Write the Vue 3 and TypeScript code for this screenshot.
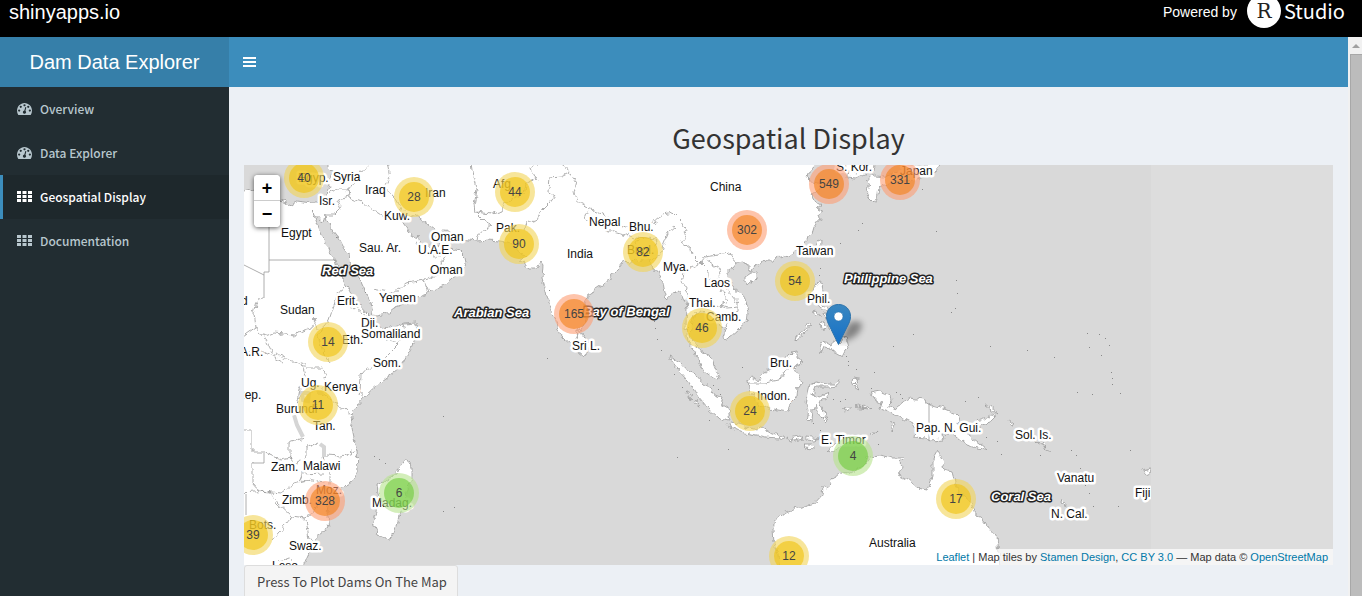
<script setup lang="ts">
import { ref } from 'vue'

interface MenuItem { label: string; icon: 'gauge' | 'grid' }
interface Label { text: string; x: number; y: number }
interface Cluster { count: number; x: number; y: number }

const menu: MenuItem[] = [
  { label: 'Overview', icon: 'gauge' },
  { label: 'Data Explorer', icon: 'gauge' },
  { label: 'Geospatial Display', icon: 'grid' },
  { label: 'Documentation', icon: 'grid' },
]
const active = ref(2)

const gaugePath =
  'M384 1152q0-53-37.5-90.5t-90.5-37.5-90.5 37.5-37.5 90.5 37.5 90.5 90.5 37.5 90.5-37.5 37.5-90.5zm192-448q0-53-37.5-90.5t-90.5-37.5-90.5 37.5-37.5 90.5 37.5 90.5 90.5 37.5 90.5-37.5 37.5-90.5zm428 481l101-382q6-26-7.5-48.5t-38.5-29.5-48 6.5-30 39.5l-101 382q-60 5-107 43.5t-63 98.5q-20 77 20 146t117 89 146-20 89-117q16-60-6-117t-72-91zm660-33q0-53-37.5-90.5t-90.5-37.5-90.5 37.5-37.5 90.5 37.5 90.5 90.5 37.5 90.5-37.5 37.5-90.5zm-640-640q0-53-37.5-90.5t-90.5-37.5-90.5 37.5-37.5 90.5 37.5 90.5 90.5 37.5 90.5-37.5 37.5-90.5zm448 192q0-53-37.5-90.5t-90.5-37.5-90.5 37.5-37.5 90.5 37.5 90.5 90.5 37.5 90.5-37.5 37.5-90.5zm320 448q0 261-141 483-19 29-54 29h-1402q-35 0-54-29-141-221-141-483 0-182 71-348t191-286 286-191 348-71 348 71 286 191 191 286 71 348z'
const gridPath =
  'M0 0h4v3h-4zM5.500 0h4v3h-4zM11 0h4v3h-4zM0 4h4v3h-4zM5.500 4h4v3h-4zM11 4h4v3h-4zM0 8h4v3h-4zM5.500 8h4v3h-4zM11 8h4v3h-4z'

// Land outlines in map pixels, origin at the map's top left corner.
const land: string[] = [
  // Africa, Arabia and mainland Asia
  'M-4 28L5 25 10 24 16 25 22 27 29 32 35 36 42 38 48 40 53 36 60 37 67 38 75 38 80 36 83 30 85 20 86 13 88 6 83 1 83 -5 576 -5 570 3 564 8 563 13 567 17 575 18 576 24 568 30 573 38 577 40 573 43 578 46 575 50 576 54 570 62 568 69 564 72 562 78 556 84 548 88 540 91 532 93 530 96 522 96 514 99 510 100 508 107 504 105 504 99 498 97 493 98 489 103 484 105 484 113 491 123 498 129 502 137 504 147 503 157 494 165 488 170 481 175 479 172 482 163 476 160 469 153 464 148 456 147 451 148 448 157 446 170 448 177 454 182 458 188 465 190 468 195 473 207 475 215 469 213 459 205 453 192 449 183 444 177 442 160 443 143 438 130 434 125 429 128 423 133 420 123 419 117 414 108 409 102 406 95 401 92 396 98 391 95 386 98 379 97 376 101 369 108 363 117 359 120 350 126 344 130 341 137 341 157 333 170 330 176 323 177 318 172 311 153 306 140 303 130 298 113 299 100 297 97 293 103 286 103 279 97 275 95 283 90 276 88 268 78 256 76 245 75 233 76 225 75 216 74 206 67 201 65 194 66 188 62 182 58 172 50 166 52 158 46 158 55 163 62 168 70 172 76 174 70 176 78 182 81 192 82 200 76 205 70 206 84 216 86 222 92 223 97 216 107 208 113 200 120 190 125 180 131 167 135 158 140 150 143 142 149 133 151 129 150 127 138 123 130 117 117 110 107 105 97 104 88 100 83 96 75 93 70 85 60 82 57 81 49 79 58 75 55 68 46 71 53 75 63 81 77 86 88 92 95 95 107 100 117 107 127 113 137 122 147 127 152 130 157 133 162 147 163 160 158 173 157 174 167 167 183 158 200 150 207 137 217 120 233 112 242 107 250 109 256 107 263 110 277 113 285 114 307 108 317 97 323 85 332 83 350 85 363 72 373 68 382 63 393 58 405-4 405z',
  // Madagascar, Sri Lanka
  'M163 294L168 303 168 312 164 324 158 343 153 360 148 372 142 374 134 370 129 357 133 347 135 333 133 320 147 312 155 305z',
  'M334 167L340 170 346 180 343 188 337 189 333 179z',
  // Korea, Japan
  'M598 -4L632 -4 630 6 620 9 612 13 603 12 604 5z',
  'M621 16L630 11 640 12 655 7 668 9 690 -4 700 -4 690 8 662 16 645 19 635 22 634 30 630 38 626 34 622 25 628 20z',
  // Taiwan, Hainan
  'M570 80L574 75 577 77 576 86 573 93 570 89z',
  'M508 108L513 108 513 113 508 118 502 117 502 112z',
  // Philippines
  'M574 117L578 119 579 127 577 134 578 140 584 142 584 148 576 142 570 137 569 126z',
  'M569 147L573 146 575 152 571 152zM579 148L584 150 581 154zM577 158L581 156 584 162 579 167zM586 153L592 156 591 166 586 165zM593 160L598 164 595 169z',
  'M576 185L577 179 582 178 587 181 590 176 595 178 601 171 604 183 601 186 598 192 591 188 588 183 580 182 577 189z',
  'M566 157L567 160 560 168 551 176 552 171 560 165z',
  // Sumatra, Java and the lesser Sunda islands
  'M425 192L436 197 446 208 452 210 459 218 466 222 471 230 479 233 477 239 484 243 486 255 474 253 463 243 454 232 444 215 433 203z',
  'M484 261L487 257 498 260 506 263 513 265 518 262 528 268 535 270 534 273 522 272 513 270 500 268z',
  'M535 272L540 271 541 275 536 274zM543 271L548 274 545 276zM548 273L555 271 559 274 550 276zM562 272L576 274 571 276 562 275zM559 279L568 279 571 283 562 282zM583 285L590 279 604 273 599 281 588 287z',
  // Borneo, Sulawesi
  'M504 215L508 212 514 215 519 208 529 203 539 198 544 191 548 187 553 186 553 192 560 197 551 202 553 209 559 218 553 222 552 231 546 237 544 247 534 245 526 243 516 240 510 233 505 225z',
  'M564 228L566 220 571 217 583 219 590 219 596 214 593 221 583 222 571 222 568 230 576 232 586 228 585 231 575 237 581 247 583 255 575 250 571 240 569 245 568 256 563 255 565 245 562 240z',
  'M609 212L615 213 614 216 611 219 616 226 610 222 608 217zM610 242L621 240 628 245 617 243zM599 243L606 242 606 245 600 246zM576 251L580 254 584 252 582 257zM443 232L447 233 444 235zM446 230L442 225 448 229zM452 235L455 242 450 238z',
  // New Guinea and Melanesia
  'M626 228L636 226 646 230 647 237 643 241 651 243 658 237 666 233 679 235 688 240 699 243 711 248 716 253 714 260 721 265 726 272 736 279 742 284 733 283 723 280 713 272 706 268 698 269 699 275 686 276 682 273 671 272 672 265 668 258 656 252 643 247 636 244 638 238 630 234z',
  'M728 258L743 253 748 249 752 251 745 258 733 262zM739 238L748 242 753 249 747 245zM764 255L771 260 768 261zM790 277L798 278 802 282 795 279zM800 284L807 286 804 286zM626 271L633 265 627 273zM647 256L650 261 647 265zM616 240L623 243 617 243z',
  // Australia
  'M626 291L636 290 649 293 659 293 657 298 658 302 654 310 664 315 674 323 683 325 688 312 688 298 690 292 694 285 697 292 699 295 701 305 708 307 711 318 716 328 728 338 732 350 740 355 744 362 753 372 755 388 756 405 536 405 534 390 530 378 529 365 531 355 541 348 556 342 571 338 578 330 579 322 583 324 588 315 596 308 605 309 618 302z',
  'M900 305L907 303 907 306 901 309zM896 322L902 320 903 324zM818 335L824 342 817 338z',
]

// Political borders.
const borders: string[] = [
  'M20 133L14 134 10 148 12 162 20 172 28 188 45 195 62 200M-2 172L12 162M20 172L30 168 50 170 58 165 68 162 70 154 73 165M100 122L93 130 90 140 85 155 74 170 78 185 85 197M90 139L100 140 112 143 127 155',
  'M133 163L139 175 155 178 133 200 122 204 117 210 116 228 120 233M160 158L162 168 155 178M0 187L20 186 40 197M57 200L62 212 55 225 52 240M78 200L82 215 78 228 95 240 107 250M57 203H78M78 228H62L52 233',
  'M82 50L90 50 97 43 93 35 105 32 120 38 138 50 144 52M85 28L92 24 105 24 115 10 126 -2M104 24L105 32M143 -2L146 12 141 22 150 32 158 46M129 124L150 128 162 118 180 115 200 108 198 96 206 84M180 115L185 128M172 78L178 88 197 92',
  'M227 -2L229 12 233 25 230 40 231 47 240 56 247 61 242 64 234 70 233 76M231 47L248 49 258 46 262 38 280 28 283 18 292 14 287 3 294 -2M280 66L283 58 293 55 298 45 305 38 311 30 304 25 305 13 318 12 326 8 317 -2M326 8L333 17 330 28 336 38 345 43 358 48 370 58 382 62 392 62 406 60M345 43L341 53 347 58 362 65 380 70 392 65',
  'M406 60L419 50 429 48 438 57 443 65 438 77 447 84 448 90 456 98 461 92 475 90 485 88 493 98M431 62L424 68 419 80 416 90 408 96M384 70L395 74 390 82 394 90M392 72L413 74 409 83M456 98L440 106 438 118 445 128 441 145M456 98L464 106 464 115 474 113 478 125 484 135 476 141 462 143M462 95L478 106 475 112 482 124 494 138 494 146 488 154 482 161M476 141L483 143 494 142',
  'M-2 265H8V287L20 287 38 295 46 293 50 297M8 298V318L15 326 37 328 50 318 66 314M59 273L45 278 45 292 52 298 62 292 62 283 73 278M82 290L98 291 113 285M79 292L86 312 86 323M80 308L58 309 56 314 80 318 79 328M-2 328L24 326 33 338 48 352 62 354 72 343 78 328M28 375L48 352M62 354L65 375 72 376M35 397L45 393 52 402',
  'M504 218L520 218 535 215 541 205 551 202M598 4L612 8',
]

// Borders that follow meridians and parallels.
const straightBorders = 'M25 38V107H20V133M25 95H92M-2 99L20 110M685 238V276M8 298H20V287M2 329V350'

const lakes = 'M50 250L53 260 59 272M76 279L80 282 80 292M58 228L65 228 64 236 59 235z'

const islets: number[][] = [
  [199, 251], [130, 291], [135, 294], [141, 298], [199, 346], [210, 342], [305, 125], [303, 193],
  [410, 156], [411, 163], [413, 174], [417, 185], [576, 103], [575, 110], [596, 78], [614, 65], [618, 58],
  [712, 115], [713, 128], [711, 143], [707, 147], [692, 66], [678, 24], [669, 169], [649, 181],
  [602, 191], [604, 200], [746, 181], [783, 185], [810, 192], [845, 182], [857, 190],
  [867, 207], [868, 213], [868, 219], [833, 227], [848, 229], [876, 228], [630, 207], [433, 292],
  [484, 284], [465, 255], [757, 289], [796, 290], [827, 285], [832, 290], [836, 303], [836, 309],
  [841, 320], [845, 328], [849, 341], [753, 276], [742, 272], [721, 236], [734, 232], [92, 72], [121, 127],
  [430, 209], [438, 222], [498, 202], [469, 220], [474, 224], [476, 229], [589, 234], [596, 236], [601, 234],
  [612, 204], [604, 196], [569, 258], [576, 265], [652, 227], [656, 229], [658, 233], [627, 223],
  [634, 279], [865, 180], [843, 168], [855, 169], [861, 173], [886, 285], [874, 341],
]

const places: Label[] = [
  { text: 'Egyp.', x: 54, y: 17 }, { text: 'Syria', x: 89, y: 16 }, { text: 'Isr.', x: 75, y: 40 },
  { text: 'Iraq', x: 121, y: 29 }, { text: 'Iran', x: 181, y: 32 }, { text: 'Kuw.', x: 140, y: 55 },
  { text: 'Egypt', x: 37, y: 72 }, { text: 'Sau. Ar.', x: 115, y: 87 }, { text: 'Oman', x: 187, y: 76 },
  { text: 'U.A.E.', x: 174, y: 89 }, { text: 'Oman', x: 186, y: 109 }, { text: 'Erit.', x: 93, y: 140 },
  { text: 'Yemen', x: 135, y: 137 }, { text: 'Sudan', x: 36, y: 149 }, { text: 'Dji.', x: 117, y: 162 },
  { text: 'Somaliland', x: 117, y: 173 }, { text: 'Eth.', x: 98, y: 179 }, { text: 'Som.', x: 129, y: 202 },
  { text: 'A.R.', x: -4, y: 191 }, { text: 'd', x: -3, y: 140 }, { text: 'Rep.', x: -8, y: 234 },
  { text: 'Ug.', x: 57, y: 222 }, { text: 'Kenya', x: 80, y: 226 }, { text: 'Burundi', x: 32, y: 248 },
  { text: 'Tan.', x: 69, y: 265 }, { text: 'Zam.', x: 27, y: 306 }, { text: 'Malawi', x: 59, y: 305 },
  { text: 'Moz.', x: 72, y: 329 }, { text: 'Zimb.', x: 38, y: 339 }, { text: 'Madag.', x: 128, y: 342 },
  { text: 'Bots.', x: 5, y: 364 }, { text: 'Swaz.', x: 45, y: 385 }, { text: 'Leso.', x: 28, y: 405 },
  { text: 'Afg.', x: 249, y: 23 }, { text: 'Pak.', x: 252, y: 67 }, { text: 'India', x: 323, y: 93 },
  { text: 'Nepal', x: 345, y: 61 }, { text: 'Bhu.', x: 385, y: 66 }, { text: 'Bngl.', x: 383, y: 89 },
  { text: 'Mya.', x: 419, y: 106 }, { text: 'Laos', x: 460, y: 122 }, { text: 'Thai.', x: 445, y: 142 },
  { text: 'Camb.', x: 462, y: 156 }, { text: 'Sri L.', x: 328, y: 185 }, { text: 'China', x: 466, y: 26 },
  { text: 'S. Kor.', x: 592, y: 6 }, { text: 'Japan', x: 656, y: 10 }, { text: 'Taiwan', x: 552, y: 90 },
  { text: 'Phil.', x: 563, y: 138 }, { text: 'Bru.', x: 526, y: 202 }, { text: 'Indon.', x: 513, y: 235 },
  { text: 'E. Timor', x: 577, y: 279 }, { text: 'Pap. N. Gui.', x: 672, y: 267 }, { text: 'Sol. Is.', x: 771, y: 274 },
  { text: 'Vanatu', x: 813, y: 317 }, { text: 'N. Cal.', x: 807, y: 353 }, { text: 'Fiji', x: 891, y: 332 },
  { text: 'Australia', x: 625, y: 382 },
]

const seas: Label[] = [
  { text: 'Red Sea', x: 78, y: 110 }, { text: 'Arabian Sea', x: 210, y: 152 },
  { text: 'Bay of Bengal', x: 339, y: 151 }, { text: 'Philippine Sea', x: 600, y: 118 },
  { text: 'Coral Sea', x: 747, y: 336 },
]

const clusters: Cluster[] = [
  { count: 40, x: 60, y: 13 }, { count: 28, x: 170, y: 32 }, { count: 44, x: 271, y: 27 },
  { count: 90, x: 275, y: 79 }, { count: 82, x: 399, y: 87 }, { count: 165, x: 330, y: 149 },
  { count: 302, x: 503, y: 65 }, { count: 549, x: 585, y: 19 }, { count: 331, x: 656, y: 15 },
  { count: 54, x: 551, y: 116 }, { count: 46, x: 458, y: 163 }, { count: 14, x: 84, y: 177 },
  { count: 11, x: 74, y: 240 }, { count: 328, x: 81, y: 336 }, { count: 6, x: 155, y: 328 },
  { count: 39, x: 9, y: 370 }, { count: 24, x: 506, y: 246 }, { count: 4, x: 609, y: 291 },
  { count: 17, x: 712, y: 334 }, { count: 12, x: 545, y: 391 },
]

const sizeClass = (n: number): string => (n < 10 ? 'small' : n < 100 ? 'medium' : 'large')
</script>

<template>
  <div class="page">
    <header class="topbar">
      <a class="site" href="#">shinyapps.io</a>
      <div class="powered">
        <span>Powered by</span>
        <a class="rstudio" href="#" aria-label="RStudio">
          <span class="ball">R</span><span class="studio">Studio</span>
        </a>
      </div>
    </header>

    <div class="viewport">
      <div class="app">
        <nav class="navbar">
          <a class="brand" href="#">Dam Data Explorer</a>
          <button class="toggle" type="button" aria-label="Toggle navigation">
            <svg width="13" height="10" viewBox="0 0 13 10"><path d="M0 0h13v2H0zM0 4h13v2H0zM0 8h13v2H0z" fill="#fff" /></svg>
          </button>
        </nav>

        <div class="body">
          <aside class="sidebar">
            <a
              v-for="(item, i) in menu"
              :key="item.label"
              href="#"
              class="item"
              :class="{ active: i === active }"
              @click.prevent="active = i"
            >
              <svg v-if="item.icon === 'gauge'" class="icon" viewBox="0 256 1792 1408"><path :d="gaugePath" fill="currentColor" /></svg>
              <svg v-else class="icon" viewBox="0 0 15 12"><path :d="gridPath" fill="currentColor" /></svg>
              <span>{{ item.label }}</span>
            </a>
          </aside>

          <main class="content">
            <h1>Geospatial Display</h1>
            <div class="map">
              <svg class="tiles" width="907" height="400" viewBox="0 0 907 400">
                <defs>
                  <filter id="rough" filterUnits="userSpaceOnUse" x="-5" y="-5" width="917" height="410" color-interpolation-filters="sRGB">
                    <feTurbulence type="fractalNoise" baseFrequency="0.16" numOctaves="2" seed="4" result="noise" />
                    <feDisplacementMap in="SourceGraphic" in2="noise" scale="7" xChannelSelector="R" yChannelSelector="G" />
                  </filter>
                </defs>
                <rect width="907" height="400" fill="#d9d9d9" />
                <g filter="url(#rough)">
                  <g class="land"><path v-for="(d, i) in land" :key="i" :d="d" /></g>
                  <g class="borders"><path v-for="(d, i) in borders" :key="i" :d="d" /></g>
                </g>
                <path class="borders" :d="straightBorders" />
                <path class="lakes" :d="lakes" />
                <rect v-for="(p, i) in islets" :key="i" :x="p[0]" :y="p[1]" width="1" height="1" fill="#888" />
                <g class="places">
                  <text v-for="(l, i) in places" :key="i" :x="l.x" :y="l.y">{{ l.text }}</text>
                </g>
                <g class="seas">
                  <text v-for="l in seas" :key="l.text" :x="l.x" :y="l.y">{{ l.text }}</text>
                </g>
              </svg>

              <button
                v-for="c in clusters"
                :key="c.count"
                type="button"
                class="cluster"
                :class="sizeClass(c.count)"
                :style="{ left: c.x + 'px', top: c.y + 'px' }"
              ><span>{{ c.count }}</span></button>

              <svg class="pin" width="56" height="42" viewBox="0 0 56 42">
                <defs>
                  <linearGradient id="pinFill" x1="0" y1="0" x2="0" y2="1">
                    <stop offset="0" stop-color="#3a87c0" /><stop offset="1" stop-color="#1470c8" />
                  </linearGradient>
                  <filter id="soft" x="-50%" y="-50%" width="200%" height="200%"><feGaussianBlur stdDeviation="3" /></filter>
                </defs>
                <path d="M13 40L22 20Q31 14 36 20Q36 27 28 33z" fill="#000" opacity=".4" filter="url(#soft)" />
                <path d="M12.500 .5C5.500 .5 .5 5.500 .5 12.500C.5 16 2 19.500 4 23L12.500 40.500L21 23C23 19.500 24.500 16 24.500 12.500C24.500 5.500 19.500 .5 12.500 .5z" fill="url(#pinFill)" stroke="#2b72ab" />
                <circle cx="12.500" cy="12.500" r="4.500" fill="#fff" stroke="#2b72ab" stroke-width=".6" />
              </svg>

              <div class="zoom">
                <button type="button" aria-label="Zoom in">+</button>
                <button type="button" aria-label="Zoom out">−</button>
              </div>

              <div class="attribution">
                <a href="#">Leaflet</a> | Map tiles by <a href="#">Stamen Design</a>, <a href="#">CC BY 3.0</a> — Map data © <a href="#">OpenStreetMap</a>
              </div>
            </div>
            <button class="plot" type="button">Press To Plot Dams On The Map</button>
          </main>
        </div>
      </div>

      <div class="scrollbar" aria-hidden="true">
        <svg width="8" height="17" viewBox="0 0 8 17"><path d="M0 11L4 7L8 11z" fill="#a0a0a0" /></svg>
        <div class="thumb"></div>
      </div>
    </div>
  </div>
</template>

<style>
body {
  margin: 0;
  overflow: hidden;
}
</style>

<style scoped>
* {
  box-sizing: border-box;
}
a {
  text-decoration: none;
}
button {
  font: inherit;
  cursor: pointer;
}
.page {
  display: flex;
  flex-direction: column;
  height: 100vh;
  overflow: hidden;
  font-family: "Noto Sans CJK SC", sans-serif;
  color: #333;
}
.topbar {
  display: flex;
  flex: none;
  justify-content: space-between;
  height: 37px;
  padding: 0 17px 0 9px;
  overflow: hidden;
  background: #000;
  color: #fff;
  font-family: "Liberation Sans", Arial, sans-serif;
  font-size: 14px;
  line-height: 24px;
}
.site {
  color: #fff;
  font-size: 20px;
}
.powered,
.rstudio {
  display: flex;
}
.powered {
  gap: 10px;
}
.rstudio {
  gap: 3px;
  color: #fff;
}
.ball {
  width: 34px;
  height: 34px;
  margin-top: -6px;
  border-radius: 50%;
  background: #fff;
  color: #222;
  font: 20px/34px "DejaVu Serif", serif;
  text-align: center;
}
.studio {
  font-family: "Noto Sans CJK SC", sans-serif;
  font-size: 20px;
  line-height: 22px;
}
.viewport {
  display: flex;
  flex: 1;
  min-height: 0;
}
.app {
  display: flex;
  flex: 1;
  flex-direction: column;
  min-width: 0;
  background: #ecf0f5;
}
.navbar {
  display: flex;
  flex: none;
  height: 50px;
  background: #3c8dbc;
}
.brand {
  width: 229px;
  background: #367fa9;
  color: #fff;
  font: 20px/50px "Liberation Sans", Arial, sans-serif;
  text-align: center;
}
.toggle {
  display: flex;
  align-items: center;
  padding: 0 14px;
  border: 0;
  background: none;
}
.body {
  display: flex;
  flex: 1;
  min-height: 0;
}
.sidebar {
  flex: none;
  width: 229px;
  background: #222d32;
}
.item {
  display: flex;
  align-items: center;
  gap: 8px;
  height: 44px;
  padding: 0 14px;
  border-left: 3px solid transparent;
  color: #b8c7ce;
  font-size: 12px;
  font-weight: 500;
  line-height: 20px;
}
.item.active {
  border-left-color: #3c8dbc;
  background: #1e282c;
  color: #fff;
}
.icon {
  width: 15px;
  height: 12px;
}
.content {
  flex: 1;
  min-width: 0;
  padding: 34px 15px 0;
  overflow: hidden;
}
h1 {
  margin: 0 0 11px;
  font-size: 27px;
  font-weight: 400;
  line-height: 33px;
  text-align: center;
}
.map {
  position: relative;
  height: 400px;
  overflow: hidden;
  background: #ddd;
  font-family: "Liberation Sans", Arial, sans-serif;
}
.tiles {
  display: block;
}
.land {
  fill: #fff;
  stroke: #999;
  stroke-width: 0.8;
}
.borders {
  fill: none;
  stroke: #999;
  stroke-width: 0.8;
}
.lakes {
  fill: none;
  stroke: #d5d5d5;
  stroke-width: 4;
}
.places {
  fill: #111;
  stroke: #fff;
  stroke-width: 5;
  stroke-linejoin: round;
  paint-order: stroke;
  font-size: 12px;
}
.seas {
  fill: #fff;
  stroke: #222;
  stroke-width: 3;
  stroke-linejoin: round;
  paint-order: stroke;
  font-size: 13px;
  font-style: italic;
  font-weight: 700;
}
.cluster {
  position: absolute;
  width: 40px;
  height: 40px;
  margin: -20px 0 0 -20px;
  padding: 5px;
  border: 0;
  border-radius: 50%;
  color: #444;
  font-size: 12px;
}
.cluster span {
  display: block;
  width: 30px;
  height: 30px;
  border-radius: 50%;
  line-height: 30px;
}
.small {
  background: rgba(181, 226, 140, 0.6);
}
.small span {
  background: rgba(110, 204, 57, 0.6);
}
.medium {
  background: rgba(241, 211, 87, 0.6);
}
.medium span {
  background: rgba(240, 194, 12, 0.6);
}
.large {
  background: rgba(253, 156, 115, 0.6);
}
.large span {
  background: rgba(241, 128, 23, 0.6);
}
.pin {
  position: absolute;
  left: 582px;
  top: 139px;
}
.zoom {
  position: absolute;
  top: 10px;
  left: 10px;
  width: 26px;
  overflow: hidden;
  border-radius: 4px;
  background: #fff;
  box-shadow: 0 1px 5px rgba(0, 0, 0, 0.65);
}
.zoom button {
  display: block;
  width: 26px;
  height: 26px;
  padding: 0;
  border: 0;
  background: #fff;
  color: #000;
  font-size: 18px;
  font-weight: 700;
  line-height: 26px;
}
.zoom button:first-child {
  border-bottom: 1px solid #ccc;
}
.attribution {
  position: absolute;
  right: 0;
  bottom: 0;
  padding: 0 5px;
  background: rgba(255, 255, 255, 0.7);
  color: #333;
  font-size: 11px;
  line-height: 16px;
  white-space: nowrap;
}
.attribution a {
  color: #0078a8;
}
.plot {
  display: block;
  height: 34px;
  padding: 0 10px 0 12px;
  border: 1px solid #ddd;
  border-radius: 3px;
  background: #f4f4f4;
  color: #444;
  font-size: 13px;
  line-height: 32px;
}
.scrollbar {
  display: flex;
  flex: none;
  flex-direction: column;
  align-items: center;
  width: 14px;
  padding-left: 2px;
  background: #f1f1f1;
}
.thumb {
  flex: 1;
  align-self: stretch;
  border: 1px solid #a8a8a8;
  border-right: 0;
  border-bottom: 0;
  background: #bcbcbc;
}
</style>
